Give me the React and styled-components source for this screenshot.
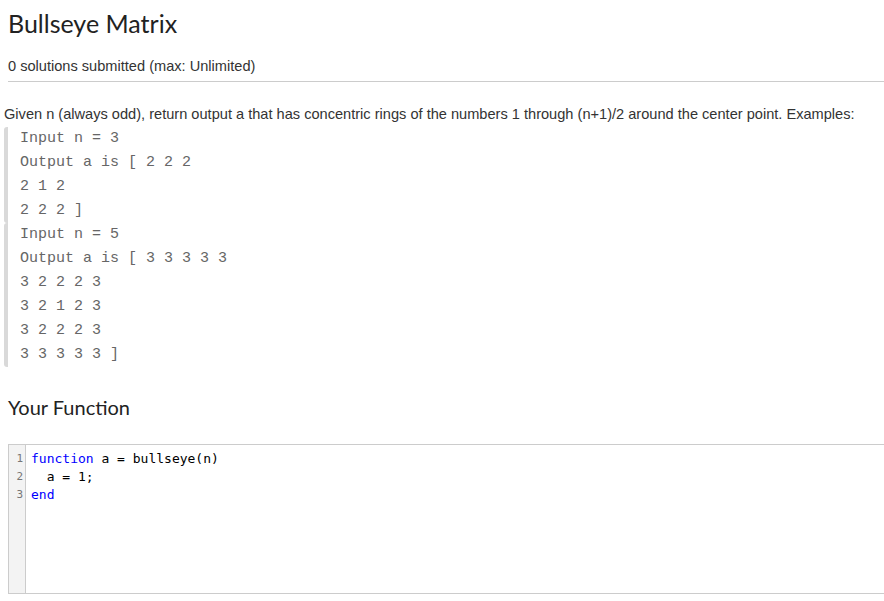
import React from 'react';
import styled, { createGlobalStyle } from 'styled-components';

const GlobalStyle = createGlobalStyle`
  body {
    margin: 0;
    background: #fff;
    font-family: "Liberation Sans", Arial, Helvetica, sans-serif;
  }
`;

const sans = `"Liberation Sans", Arial, Helvetica, sans-serif`;
const courier = `"Courier New", Courier, "Liberation Mono", monospace`;

const examples = [
  ['Input n = 3', 'Output a is [ 2 2 2', '2 1 2', '2 2 2 ]'],
  ['Input n = 5', 'Output a is [ 3 3 3 3 3', '3 2 2 2 3', '3 2 1 2 3', '3 2 2 2 3', '3 3 3 3 3 ]'],
];

const code = [
  [{ kw: true, t: 'function' }, { t: ' a = bullseye(n)' }],
  [{ t: '  a = 1;' }],
  [{ kw: true, t: 'end' }],
];

const App = () => (
  <Page>
    <GlobalStyle />
    <Header>
      <Title>Bullseye Matrix</Title>
      <Submitted>0 solutions submitted (max: Unlimited)</Submitted>
    </Header>
    <Description>
      Given n (always odd), return output a that has concentric rings of the numbers 1 through
      (n+1)/2 around the center point. Examples:
    </Description>
    <Examples>
      {examples.map((lines, i) => (
        <Quote key={i}>
          {lines.map((line, j) => (
            <QuoteLine key={j}>{line}</QuoteLine>
          ))}
        </Quote>
      ))}
    </Examples>
    <SectionTitle>Your Function</SectionTitle>
    <Editor>
      <Gutter>
        {code.map((_, i) => (
          <LineNo key={i}>{i + 1}</LineNo>
        ))}
      </Gutter>
      <CodeArea>
        {code.map((parts, i) => (
          <CodeLine key={i}>
            {parts.map((p, j) => (
              <Token key={j} $kw={p.kw}>{p.t}</Token>
            ))}
          </CodeLine>
        ))}
      </CodeArea>
    </Editor>
  </Page>
);

export default App;

const Page = styled.div`
  padding: 0 0 0 4px;
  color: #333;
  font-family: ${sans};
`;

const Header = styled.div`
  margin: 0 0 0 4px;
  border-bottom: 1px solid #ccc;
  padding-bottom: 5px;
`;

const Title = styled.h1`
  margin: 0;
  padding-top: 7px;
  font-family: Lato, "Noto Sans", sans-serif;
  font-weight: 400;
  font-size: 25px;
  line-height: 32px;
  color: #222;
`;

const Submitted = styled.div`
  margin-top: 17px;
  font-family: ${sans};
  font-size: 14.6px;
  line-height: 20px;
  color: #333;
`;

const Description = styled.p`
  margin: 22px 0 0;
  font-family: ${sans};
  font-size: 14.6px;
  line-height: 20px;
  color: #333;
  white-space: nowrap;
`;

const Examples = styled.div`
  margin-top: 3px;
`;

const Quote = styled.blockquote`
  margin: 0;
  padding-left: 12px;
  border-left: 4px solid #d9d9d9;
  border-radius: 3px;
`;

const QuoteLine = styled.div`
  font-family: ${courier};
  font-size: 15px;
  line-height: 24px;
  color: #666;
  white-space: pre;
`;

const SectionTitle = styled.h2`
  margin: 27px 0 0 4px;
  font-family: Lato, "Noto Sans", sans-serif;
  font-weight: 400;
  font-size: 20px;
  line-height: 26px;
  color: #222;
`;

const Editor = styled.div`
  display: flex;
  margin: 24px 0 0 4px;
  height: 148px;
  border: 1px solid #ccc;
  border-right: none;
`;

const Gutter = styled.div`
  width: 16px;
  padding: 5px 0 0 0;
  background: #f3f3f3;
  border-right: 1px solid #ccc;
`;

const LineNo = styled.div`
  font-family: "DejaVu Sans Mono", monospace;
  font-size: 11px;
  line-height: 18px;
  color: #777;
  text-align: right;
  padding-right: 2px;
`;

const CodeArea = styled.div`
  flex: 1;
  padding: 5px 0 0 5px;
`;

const CodeLine = styled.div`
  font-family: "DejaVu Sans Mono", monospace;
  font-size: 13px;
  line-height: 18px;
  white-space: pre;
  color: #000;
`;

const Token = styled.span`
  color: ${p => (p.$kw ? '#0000ff' : '#000')};
`;
